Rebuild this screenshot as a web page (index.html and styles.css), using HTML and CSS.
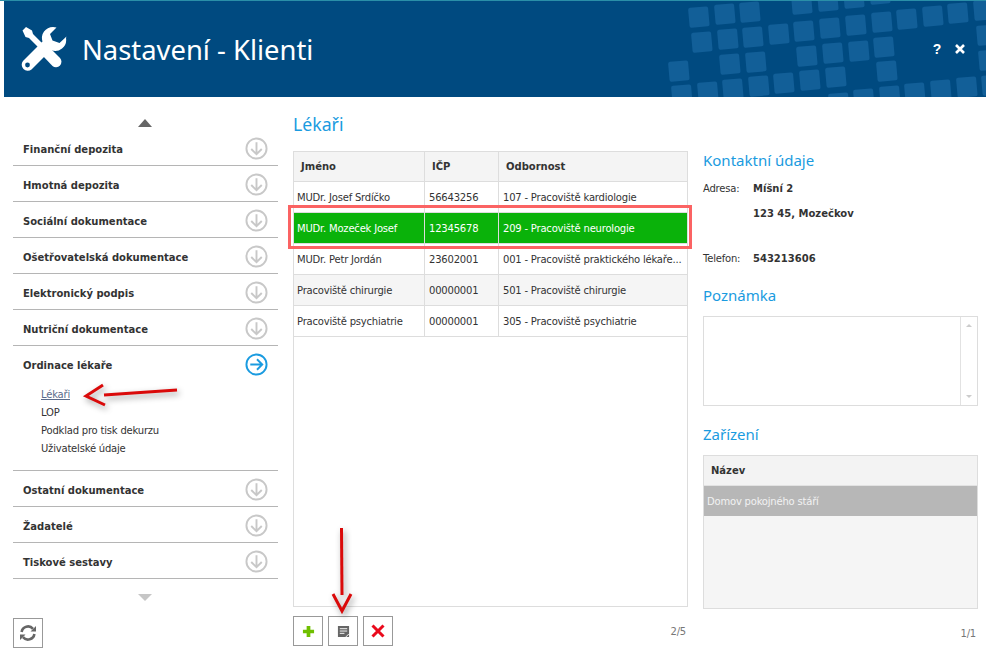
FILE: index.html
```html
<!DOCTYPE html>
<html lang="cs">
<head>
<meta charset="utf-8">
<title>Nastavení - Klienti</title>
<link rel="stylesheet" href="styles.css">
</head>
<body>
<div class="window">
  <header class="header">
    <svg class="pattern" viewBox="660 0 326 96" width="326" height="96" aria-hidden="true">
      <g fill="#125f98">
        <rect x="688" y="7" width="20" height="20" rx="2" transform="rotate(-5 688 7)"/><rect x="714" y="4" width="20" height="20" rx="2" transform="rotate(-5 714 4)"/><rect x="739" y="2" width="20" height="20" rx="2" transform="rotate(-5 739 2)"/>
        <rect x="791" y="-6" width="20" height="20" rx="2" transform="rotate(-5 791 -6)"/><rect x="817" y="-9" width="20" height="20" rx="2" transform="rotate(-5 817 -9)"/><rect x="843" y="-12" width="20" height="20" rx="2" transform="rotate(-5 843 -12)"/><rect x="869" y="-16" width="20" height="20" rx="2" transform="rotate(-5 869 -16)"/>
        <rect x="691" y="32" width="20" height="20" rx="2" transform="rotate(-5 691 32)"/><rect x="717" y="29" width="20" height="20" rx="2" transform="rotate(-5 717 29)"/><rect x="742" y="27" width="20" height="20" rx="2" transform="rotate(-5 742 27)"/><rect x="768" y="24" width="20" height="20" rx="2" transform="rotate(-5 768 24)"/><rect x="793" y="21" width="20" height="20" rx="2" transform="rotate(-5 793 21)"/><rect x="819" y="18" width="20" height="20" rx="2" transform="rotate(-5 819 18)"/><rect x="845" y="15" width="20" height="20" rx="2" transform="rotate(-5 845 15)"/><rect x="871" y="12" width="20" height="20" rx="2" transform="rotate(-5 871 12)"/><rect x="896" y="9" width="20" height="20" rx="2" transform="rotate(-5 896 9)"/><rect x="922" y="6" width="20" height="20" rx="2" transform="rotate(-5 922 6)"/><rect x="947" y="3" width="20" height="20" rx="2" transform="rotate(-5 947 3)"/><rect x="973" y="0" width="20" height="20" rx="2" transform="rotate(-5 973 0)"/>
        <rect x="719" y="54" width="20" height="20" rx="2" transform="rotate(-5 719 54)"/><rect x="745" y="52" width="20" height="20" rx="2" transform="rotate(-5 745 52)"/><rect x="796" y="46" width="20" height="20" rx="2" transform="rotate(-5 796 46)"/><rect x="822" y="43" width="20" height="20" rx="2" transform="rotate(-5 822 43)"/><rect x="848" y="41" width="20" height="20" rx="2" transform="rotate(-5 848 41)"/><rect x="873" y="37" width="20" height="20" rx="2" transform="rotate(-5 873 37)"/>
        <rect x="668" y="61" width="20" height="20" rx="2" transform="rotate(-5 668 61)"/><rect x="876" y="61" width="20" height="20" rx="2" transform="rotate(-5 876 61)"/><rect x="976" y="25" width="20" height="20" rx="2" transform="rotate(-5 976 25)"/><rect x="978" y="50" width="20" height="20" rx="2" transform="rotate(-5 978 50)"/>
        <rect x="697" y="82" width="20" height="20" rx="2" transform="rotate(-5 697 82)"/><rect x="722" y="79" width="20" height="20" rx="2" transform="rotate(-5 722 79)"/><rect x="748" y="76" width="20" height="20" rx="2" transform="rotate(-5 748 76)"/><rect x="773" y="73" width="20" height="20" rx="2" transform="rotate(-5 773 73)"/><rect x="799" y="70" width="20" height="20" rx="2" transform="rotate(-5 799 70)"/><rect x="825" y="67" width="20" height="20" rx="2" transform="rotate(-5 825 67)"/>
        <rect x="671" y="85" width="20" height="20" rx="2" transform="rotate(-5 671 85)"/><rect x="828" y="93" width="20" height="20" rx="2" transform="rotate(-5 828 93)"/><rect x="853" y="89" width="20" height="20" rx="2" transform="rotate(-5 853 89)"/><rect x="879" y="86" width="20" height="20" rx="2" transform="rotate(-5 879 86)"/><rect x="904" y="83" width="20" height="20" rx="2" transform="rotate(-5 904 83)"/><rect x="930" y="80" width="20" height="20" rx="2" transform="rotate(-5 930 80)"/><rect x="956" y="77" width="20" height="20" rx="2" transform="rotate(-5 956 77)"/><rect x="981" y="75" width="20" height="20" rx="2" transform="rotate(-5 981 75)"/>
      </g>
    </svg>
    <svg class="logo" viewBox="0 0 46 46" width="46" height="46" aria-hidden="true">
      <path fill="#fff" d="M1.5 4.5 L5 1 L11 4.5 L12 8 L24.5 20.5 L20.5 24.5 L8 12 L4.5 11 Z"/>
      <path fill="#fff" d="M28 21 L39 32 A5.5 5.5 0 0 1 31.5 40 L21 29 Z"/>
      <path fill="#fff" d="M32 1 A11 11 0 0 0 21.5 15.5 L2 35 A6 6 0 0 0 2.5 43 A6 6 0 0 0 10.5 43.5 L30 24 A11 11 0 0 0 45 12 L45.5 10.5 L38.5 17 L31.5 14.5 L29 8 L35.5 1.5 Z"/>
      <circle cx="6.5" cy="39" r="2.4" fill="#004a80"/>
    </svg>
    <h1 class="title">Nastavení - Klienti</h1>
    <div class="win-actions">
      <span class="win-help">?</span>
      <svg viewBox="0 0 12 12" width="12" height="12" aria-hidden="true"><path d="M2 2 L10 10 M10 2 L2 10" stroke="#fff" stroke-width="2.6"/></svg>
    </div>
  </header>

  <div class="content">
    <aside class="sidebar">
      <div class="scroll-up"></div>
      <nav class="menu">
        <div class="menu-item"><div class="menu-row"><span>Finanční depozita</span><svg class="circle" viewBox="0 0 24 24" width="23" height="23"><circle cx="12" cy="12" r="10.5"/><path d="M12 5.5 V17.5 M6.5 12.5 L12 18 L17.5 12.5"/></svg></div></div>
        <div class="menu-item"><div class="menu-row"><span>Hmotná depozita</span><svg class="circle" viewBox="0 0 24 24" width="23" height="23"><circle cx="12" cy="12" r="10.5"/><path d="M12 5.5 V17.5 M6.5 12.5 L12 18 L17.5 12.5"/></svg></div></div>
        <div class="menu-item"><div class="menu-row"><span>Sociální dokumentace</span><svg class="circle" viewBox="0 0 24 24" width="23" height="23"><circle cx="12" cy="12" r="10.5"/><path d="M12 5.5 V17.5 M6.5 12.5 L12 18 L17.5 12.5"/></svg></div></div>
        <div class="menu-item"><div class="menu-row"><span>Ošetřovatelská dokumentace</span><svg class="circle" viewBox="0 0 24 24" width="23" height="23"><circle cx="12" cy="12" r="10.5"/><path d="M12 5.5 V17.5 M6.5 12.5 L12 18 L17.5 12.5"/></svg></div></div>
        <div class="menu-item"><div class="menu-row"><span>Elektronický podpis</span><svg class="circle" viewBox="0 0 24 24" width="23" height="23"><circle cx="12" cy="12" r="10.5"/><path d="M12 5.5 V17.5 M6.5 12.5 L12 18 L17.5 12.5"/></svg></div></div>
        <div class="menu-item"><div class="menu-row"><span>Nutriční dokumentace</span><svg class="circle" viewBox="0 0 24 24" width="23" height="23"><circle cx="12" cy="12" r="10.5"/><path d="M12 5.5 V17.5 M6.5 12.5 L12 18 L17.5 12.5"/></svg></div></div>
        <div class="menu-item menu-open">
          <div class="menu-row"><span>Ordinace lékaře</span><svg class="circle circle-on" viewBox="0 0 24 24" width="23" height="23"><circle cx="12" cy="12" r="10.5"/><path d="M5.5 12 H17.5 M12.5 6.5 L18 12 L12.5 17.5"/></svg></div>
          <ul class="submenu">
            <li class="sub-active">Lékaři</li>
            <li>LOP</li>
            <li>Podklad pro tisk dekurzu</li>
            <li>Uživatelské údaje</li>
          </ul>
        </div>
        <div class="menu-item"><div class="menu-row"><span>Ostatní dokumentace</span><svg class="circle" viewBox="0 0 24 24" width="23" height="23"><circle cx="12" cy="12" r="10.5"/><path d="M12 5.5 V17.5 M6.5 12.5 L12 18 L17.5 12.5"/></svg></div></div>
        <div class="menu-item"><div class="menu-row"><span>Žadatelé</span><svg class="circle" viewBox="0 0 24 24" width="23" height="23"><circle cx="12" cy="12" r="10.5"/><path d="M12 5.5 V17.5 M6.5 12.5 L12 18 L17.5 12.5"/></svg></div></div>
        <div class="menu-item"><div class="menu-row"><span>Tiskové sestavy</span><svg class="circle" viewBox="0 0 24 24" width="23" height="23"><circle cx="12" cy="12" r="10.5"/><path d="M12 5.5 V17.5 M6.5 12.5 L12 18 L17.5 12.5"/></svg></div></div>
      </nav>
      <div class="scroll-down"></div>
      <button class="btn btn-refresh" aria-label="Obnovit">
        <svg viewBox="0 0 18 18" width="18" height="18"><path fill="none" stroke="#666" stroke-width="2.6" d="M2.6 8 A6.5 6.5 0 0 1 14 4.8 M15.4 10 A6.5 6.5 0 0 1 4 13.2"/><path fill="#666" d="M11.5 7.6 L17 7.6 L17 2 Z M6.5 10.4 L1 10.4 L1 16 Z"/></svg>
      </button>
    </aside>

    <main class="main">
      <h2 class="heading heading-main">Lékaři</h2>
      <div class="grid-box">
        <div class="grid-head">
          <div class="c1">Jméno</div><div class="c2">IČP</div><div class="c3">Odbornost</div>
        </div>
        <div class="grid-row"><div class="c1">MUDr. Josef Srdíčko</div><div class="c2">56643256</div><div class="c3">107 - Pracoviště kardiologie</div></div>
        <div class="grid-row row-selected"><div class="c1">MUDr. Mozeček Josef</div><div class="c2">12345678</div><div class="c3">209 - Pracoviště neurologie</div></div>
        <div class="grid-row"><div class="c1">MUDr. Petr Jordán</div><div class="c2">23602001</div><div class="c3">001 - Pracoviště praktického lékaře...</div></div>
        <div class="grid-row row-alt"><div class="c1">Pracoviště chirurgie</div><div class="c2">00000001</div><div class="c3">501 - Pracoviště chirurgie</div></div>
        <div class="grid-row"><div class="c1">Pracoviště psychiatrie</div><div class="c2">00000001</div><div class="c3">305 - Pracoviště psychiatrie</div></div>
      </div>
      <div class="toolbar">
        <button class="btn" aria-label="Přidat"><svg viewBox="0 0 14 14" width="13" height="13"><path d="M5 1 H9 V5 H13 V9 H9 V13 H5 V9 H1 V5 H5 Z" fill="#6fbf00"/></svg></button>
        <button class="btn" aria-label="Upravit"><svg viewBox="0 0 14 14" width="13" height="13"><path d="M1 1 H13 V9 L9 13 H1 Z" fill="#666"/><path d="M3 4 H11 M3 6.5 H11 M3 9 H8" stroke="#fff" stroke-width="1"/><path d="M10 13 L13 10 V13 Z" fill="#666"/></svg></button>
        <button class="btn" aria-label="Smazat"><svg viewBox="0 0 14 14" width="14" height="14"><path d="M1.5 1.5 L12.5 12.5 M12.5 1.5 L1.5 12.5" stroke="#ea0a1c" stroke-width="3"/></svg></button>
        <span class="pager">2/5</span>
      </div>
    </main>

    <section class="details">
      <h2 class="heading">Kontaktní údaje</h2>
      <dl class="contact">
        <dt>Adresa:</dt><dd>Míšní 2</dd>
        <dt></dt><dd>123 45, Mozečkov</dd>
        <dt class="phone">Telefon:</dt><dd class="phone">543213606</dd>
      </dl>
      <h2 class="heading heading-note">Poznámka</h2>
      <div class="note">
        <div class="note-scroll"><span class="tri-up"></span><span class="tri-down"></span></div>
      </div>
      <h2 class="heading heading-dev">Zařízení</h2>
      <div class="device-box">
        <div class="device-head">Název</div>
        <div class="device-row">Domov pokojného stáří</div>
      </div>
      <div class="pager pager-dev">1/1</div>
    </section>
  </div>
</div>

<div class="highlight"></div>
<svg class="annot" viewBox="0 0 990 658" width="990" height="658" aria-hidden="true">
  <g class="annot-lines">
    <path d="M177 390 L104 395"/>
    <path d="M103 385 L86 396 L105 405"/>
    <path d="M341.5 528 L342 595"/>
    <path d="M333 594 L342 611 L351 594"/>
  </g>
</svg>
</body>
</html>
```

FILE: styles.css
```css
* { box-sizing: border-box; }
html, body { margin: 0; padding: 0; background: #fff; }
body {
  width: 990px;
  height: 658px;
  overflow: hidden;
  position: relative;
  font-family: "DejaVu Sans", sans-serif;
  font-size: 10px;
  letter-spacing: -0.2px;
  color: #333;
}
.window { margin-left: 4px; width: 982px; height: 658px; }
.header {
  position: relative;
  height: 97px;
  margin-left: -4px;
  padding: 25px 20px 0 21px;
  border-top: 1px solid #2a8fa8;
  width: 986px;
  display: flex;
  align-items: flex-start;
  background: linear-gradient(#fff, #fff) left top / 4px 100% no-repeat, #004a80;
  overflow: hidden;
}
.pattern { position: absolute; right: 0; top: 0; }
.logo { flex: none; position: relative; }
.title {
  position: relative;
  margin: 1px 0 0 15px;
  font-family: "Noto Sans", sans-serif;
  font-weight: 400;
  font-size: 27.4px;
  letter-spacing: 0;
  line-height: 46px;
  color: #fff;
}
.win-actions {
  position: relative;
  margin-left: auto;
  display: flex;
  align-items: center;
  gap: 13px;
  height: 46px;
}
.win-help { font-family: "Liberation Sans", sans-serif; font-weight: 700; font-size: 14px; color: #fff; }

.content { display: flex; align-items: flex-start; padding-left: 9px; }

.sidebar { width: 265px; flex: none; padding-top: 22px; }
.scroll-up, .scroll-down { width: 0; height: 0; border-left: 7px solid transparent; border-right: 7px solid transparent; }
.scroll-up { border-bottom: 8px solid #666; margin-left: 125px; }
.scroll-down { border-top: 7px solid #c6c6c6; margin: 15px 0 0 125px; }
.menu { margin-top: 3px; }
.menu-item { border-bottom: 1px solid #b5b5b5; }
.menu-row {
  height: 35px;
  display: flex;
  align-items: center;
  justify-content: space-between;
  padding: 0 10px 0 10px;
  font-weight: 700;
  font-size: 10px;
  letter-spacing: 0;
  color: #333;
}
.menu-row span { padding-top: 3px; }
.circle { margin-top: 2px; fill: none; stroke: #c8c8c8; stroke-width: 2; }
.circle-on { stroke: #1a9be0; }
.submenu { list-style: none; margin: 5px 0 12px; padding: 0 0 0 28px; font-size: 10px; height: 72px; }
.submenu li { height: 18px; line-height: 18px; color: #333; }
.submenu .sub-active { color: #5a6b8a; text-decoration: underline; }

.btn {
  width: 30px;
  height: 30px;
  padding: 0;
  background: #fff;
  border: 1px solid #999;
  display: inline-flex;
  align-items: center;
  justify-content: center;
}
.btn-refresh { margin-top: 17px; display: flex; }

.main { width: 395px; margin-left: 15px; flex: none; padding-top: 15px; }
.heading {
  margin: 0;
  font-family: "Noto Sans", sans-serif;
  font-weight: 400;
  font-size: 15px;
  letter-spacing: 0;
  line-height: 22px;
  color: #1a9be0;
}
.heading-main { font-size: 17.7px; line-height: 24px; }
.grid-box {
  margin-top: 15px;
  height: 456px;
  border: 1px solid #ddd;
}
.grid-head, .grid-row { display: flex; height: 31px; border-bottom: 1px solid #ddd; }
.grid-head { height: 30px; background: #f4f4f4; font-weight: 700; font-size: 10px; letter-spacing: 0; line-height: 29px; }
.grid-row { line-height: 31px; font-size: 10px; color: #333; }
.c1, .c2, .c3 { height: 100%; overflow: hidden; white-space: nowrap; }
.c1 { width: 131px; padding-left: 3px; border-right: 1px solid #ddd; }
.c2 { width: 74px; padding-left: 4px; border-right: 1px solid #ddd; }
.c3 { flex: 1; padding-left: 4px; }
.grid-head .c1 { padding-left: 7px; }
.grid-head .c2, .grid-head .c3 { padding-left: 7px; }
.row-selected { background: #0ab20a; color: #fff; }
.row-alt { background: #f5f5f5; }
.toolbar { display: flex; align-items: center; gap: 5px; margin-top: 9px; height: 30px; }
.pager { margin-left: auto; color: #777; font-size: 10px; padding-right: 2px; padding-top: 1px; }

.details { width: 275px; margin-left: 15px; flex: none; padding-top: 52px; }
.contact {
  margin: 10px 0 0;
  display: grid;
  grid-template-columns: 50px 1fr;
  font-size: 10px;
  grid-auto-rows: 25px;
}
.contact dt, .contact dd { margin: 0; line-height: 16px; }
.contact dd { font-weight: 700; letter-spacing: 0; }
.contact .phone { margin-top: 20px; }
.heading-note { margin-top: 28px; }
.note { position: relative; margin-top: 10px; height: 90px; border: 1px solid #ddd; }
.note-scroll { position: absolute; right: 0; top: 0; bottom: 0; width: 17px; border-left: 1px solid #e2e2e2; }
.tri-up, .tri-down { position: absolute; left: 5px; width: 0; height: 0; border-left: 3px solid transparent; border-right: 3px solid transparent; }
.tri-up { top: 7px; border-bottom: 3px solid #ccc; }
.tri-down { bottom: 7px; border-top: 3px solid #ccc; }
.heading-dev { margin-top: 17px; }
.device-box { margin-top: 10px; height: 154px; background: #f5f5f5; border: 1px solid #ddd; }
.device-head { height: 30px; padding-left: 7px; font-weight: 700; font-size: 10px; letter-spacing: 0; line-height: 30px; background: #f3f3f3; border-bottom: 1px solid #e2e2e2; }
.device-row { height: 30px; padding-left: 3px; line-height: 31px; background: #b7b7b7; color: #f2f2f2; font-size: 10px; }
.pager-dev { text-align: right; margin-top: 18px; }

.highlight {
  position: absolute;
  left: 288px;
  top: 205px;
  width: 404px;
  height: 44px;
  border: 3px solid #fb6363;
  pointer-events: none;
}
.annot { position: absolute; left: 0; top: 0; pointer-events: none; filter: drop-shadow(2px 3px 3px rgba(0,0,0,.4)); }
.annot-lines path { fill: none; stroke: #da0a0a; stroke-width: 3; }
```
